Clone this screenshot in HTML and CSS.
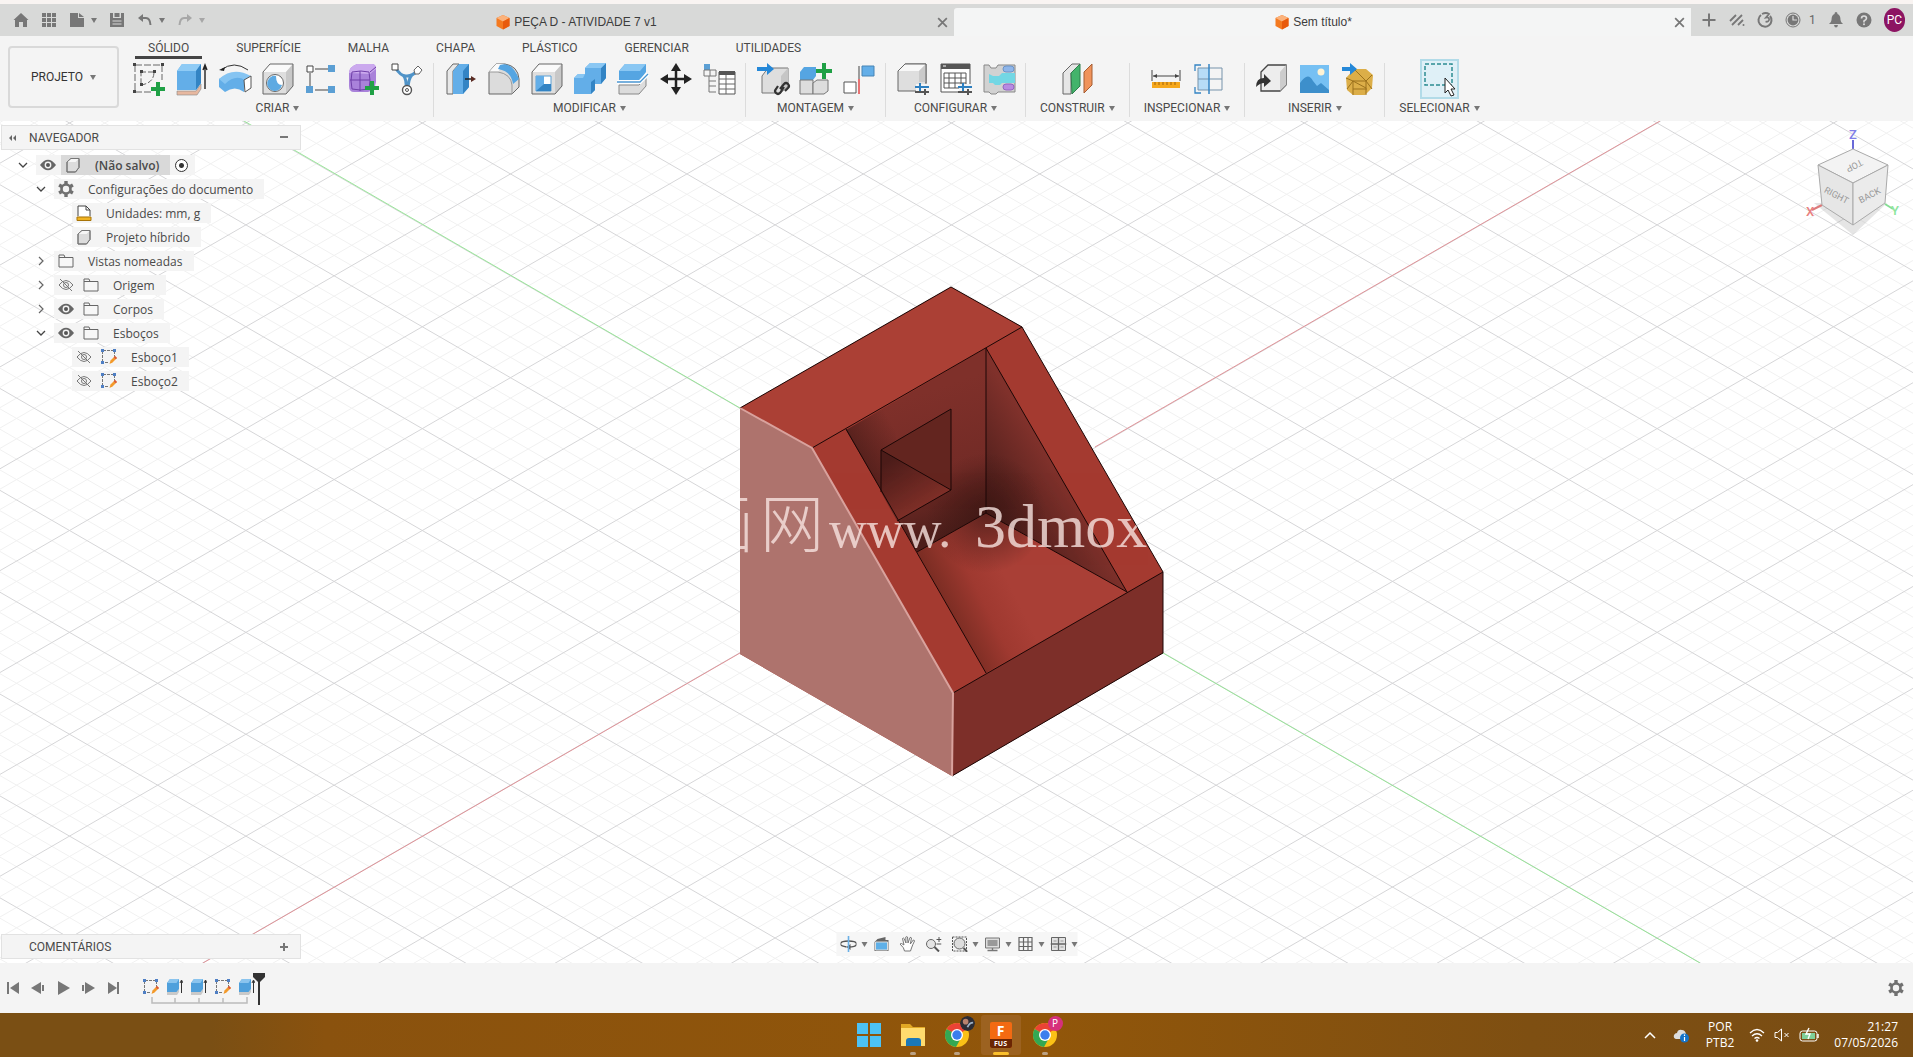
FILE: index.html
```html
<!DOCTYPE html>
<html lang="pt-BR">
<head>
  <meta charset="UTF-8" />
  <meta name="viewport" content="width=device-width, initial-scale=1.0"/>
  <title>Sem título*</title>
  <link rel="stylesheet" href="styles.css">
</head>
<body>
  <!-- shared icons -->
  <svg class="defs" aria-hidden="true">
    <symbol id="fusion" viewBox="0 0 14 16">
      <path d="M7 1l6.5 3v8L7 15.500.5 12V4z" fill="#f47a20"/>
      <path d="M7 1l6.5 3L7 7.500.5 4z" fill="#fbb27c"/>
      <path d="M7 7.5L13.5 4v8L7 15.5z" fill="#e85a0c"/>
    </symbol>
    <symbol id="close" viewBox="0 0 12 12"><path d="M2 2l8 8M10 2l-8 8" stroke="#777" stroke-width="1.6"/></symbol>
    <symbol id="eye" viewBox="0 0 16 16">
      <path d="M0 8q8-10.5 16 0q-8 10.500-16 0z" fill="#666"/>
      <circle cx="8" cy="8" r="3.4" fill="#f4f4f4"/><circle cx="8" cy="8" r="2" fill="#555"/>
    </symbol>
    <symbol id="eye-off" viewBox="0 0 16 16">
      <path d="M1 8q7-9 14 0q-7 9-14 0z" fill="none" stroke="#777"/>
      <circle cx="8" cy="8" r="2.5" fill="none" stroke="#777"/>
      <path d="M2 2l12 12" stroke="#777"/>
    </symbol>
    <symbol id="folder" viewBox="0 0 16 16"><path d="M1 14V2h5l1 2.5h8V14zM1 4.5h6" fill="#f7f7f7" stroke="#666"/></symbol>
    <symbol id="body" viewBox="0 0 16 16">
      <path d="M2 5l4-3.500h8v9L10.500 15H2z" fill="#dcdcdc" stroke="#777"/>
      <path d="M2 5l4-3.500h8L10.500 5z" fill="#f6f6f6"/>
      <path d="M2 5l4-3.500h8v9L10.500 15H2z" fill="none" stroke="#777"/>
    </symbol>
    <symbol id="gear" viewBox="0 0 16 16">
      <circle cx="8" cy="8" r="4.5" fill="none" stroke="#707070" stroke-width="2.6"/>
      <path d="M8 0v3M8 13v3M1.100 4l2.600 1.500M12.300 10.500l2.600 1.500M1.100 12l2.600-1.500M12.300 5.500L14.900 4" stroke="#707070" stroke-width="3.4"/>
    </symbol>
    <symbol id="units" viewBox="0 0 16 16">
      <path d="M2 11V1h8l4 4v6" fill="#fff" stroke="#444"/><path d="M10 1v4h4" fill="none" stroke="#444"/>
      <path d="M1 12h14v3.500H1z" fill="#f0b323" stroke="#a87408"/>
    </symbol>
    <symbol id="sketch" viewBox="0 0 16 16">
      <path d="M1.500 13V1.500h12V9M4 13.500h4" fill="none" stroke="#777" stroke-dasharray="3 1"/>
      <path d="M0 0h3v3H0zM12 0h3v3h-3zM0 12h3v3H0z" fill="#4f7fc4"/>
      <path d="M8.500 15l1-3.500L14 7l2 2-4.500 4.500z" fill="#f39a2b"/><path d="M14 7l2 2-1.300 1.300-2-2z" fill="#d9573e"/>
    </symbol>
    <symbol id="extrude-s" viewBox="0 0 16 16">
      <path d="M0 12h10l2-2v3l-2 3H0z" fill="#c9c9c9"/>
      <path d="M0 4l3-4h9v10l-2.500 3H0z" fill="#4fa0dc"/><path d="M0 4l3-4h9L9.500 4z" fill="#8ac4ee"/>
      <path d="M14.500 14V2M13 4l1.500-3L16 4" fill="none" stroke="#333"/>
    </symbol>
    <symbol id="down" viewBox="0 0 12 12"><path d="M2 4l4 4 4-4" fill="none" stroke="#444" stroke-width="1.3"/></symbol>
    <symbol id="right" viewBox="0 0 12 12"><path d="M4 2l4 4-4 4" fill="none" stroke="#666" stroke-width="1.2"/></symbol>
    <symbol id="cube" viewBox="0 0 32 32">
      <path d="M1 9l7-8h23v22l-7 8H1z" fill="#dedede"/>
      <path d="M1 9l7-8h23l-7 8z" fill="#fafafa"/><path d="M24 9l7-8v22l-7 8z" fill="#c8c8c8"/>
      <path d="M1 9l7-8h23v22l-7 8H1z" fill="none" stroke="#666"/>
    </symbol>
    <symbol id="chrome" viewBox="0 0 26 26">
      <circle cx="13" cy="13" r="12" fill="#fbc116"/>
      <path d="M13 13L2.600 7A12 12 0 0 1 23.400 7z" fill="#ea4335"/>
      <path d="M13 13L2.600 7A12 12 0 0 0 12 25l5-9z" fill="#34a853"/>
      <circle cx="13" cy="13" r="6" fill="#fff"/><circle cx="13" cy="13" r="4.7" fill="#3b7ded"/>
    </symbol>
  </svg>

  <header class="titlebar">
    <div class="quick">
      <button title="Início"><svg class="ico" viewBox="0 0 16 16"><path d="M8 1l7.500 7H14v7h-4v-5H6v5H2V8H.5z" fill="#777"/></svg></button>
      <button title="Painel de dados"><svg class="ico" viewBox="0 0 16 16"><path d="M1 1h4v4H1zM6 1h4v4H6zM11 1h4v4h-4zM1 6h4v4H1zM6 6h4v4H6zM11 6h4v4h-4zM1 11h4v4H1zM6 11h4v4H6zM11 11h4v4h-4z" fill="#777"/></svg></button>
      <button class="with-caret" title="Arquivo"><svg class="ico" viewBox="0 0 16 16"><path d="M1 1h8v5h6v9H1zM10 1l5 4h-5z" fill="#777"/></svg><i class="caret"></i></button>
      <button title="Salvar"><svg class="ico" viewBox="0 0 16 16"><path d="M1 1h3v5h8V1h3v14H1z" fill="#777"/><path d="M5.500 1h5v4h-5z" fill="#777"/><path d="M3.500 9h9M3.500 12h9" stroke="#d8d8d8"/></svg></button>
      <button class="with-caret" title="Desfazer"><svg class="ico" viewBox="0 0 16 16"><path d="M3 6h6q4 0 4.500 7" fill="none" stroke="#777" stroke-width="2"/><path d="M1 6l5-4v8z" fill="#777"/></svg><i class="caret"></i></button>
      <button class="with-caret faded" title="Refazer"><svg class="ico" viewBox="0 0 16 16"><path d="M13 6H7q-4 0-4.500 7" fill="none" stroke="#777" stroke-width="2"/><path d="M15 6l-5-4v8z" fill="#777"/></svg><i class="caret"></i></button>
    </div>
    <div class="doc-tab">
      <span class="doc-name"><svg class="doc-ico"><use href="#fusion"/></svg>PEÇA D - ATIVIDADE 7 v1</span>
      <button title="Fechar"><svg class="close"><use href="#close"/></svg></button>
    </div>
    <div class="doc-tab active">
      <span class="doc-name"><svg class="doc-ico"><use href="#fusion"/></svg>Sem título*</span>
      <button title="Fechar"><svg class="close"><use href="#close"/></svg></button>
    </div>
    <div class="account">
      <button title="Novo projeto"><svg class="ico" viewBox="0 0 16 16"><path d="M8 1.500v13M1.500 8h13" stroke="#777" stroke-width="2"/></svg></button>
      <button title="Extensões"><svg class="ico" viewBox="0 0 16 16"><path d="M1 9l6-6M3 13L13 3M9 13l5-5" stroke="#777" stroke-width="1.8"/><circle cx="14.5" cy="13" r="1" fill="#777"/></svg></button>
      <button title="Status"><svg class="ico" viewBox="0 0 16 16"><path d="M4 3A6.500 6.500 0 1 0 13 4" fill="none" stroke="#777" stroke-width="2"/><path d="M5 2q4-2 7 0L9 5.500q3.500-.5 3 2.500-1 2.500-3.500 1.500" fill="none" stroke="#777" stroke-width="1.8"/></svg></button>
      <button class="jobs" title="Tarefas"><svg class="ico" viewBox="0 0 16 16"><circle cx="8" cy="8" r="7" fill="none" stroke="#777"/><circle cx="8" cy="8" r="5.4" fill="#777"/><path d="M8 4v4h4" fill="none" stroke="#ddd" stroke-width="1.2"/></svg>1</button>
      <button title="Notificações"><svg class="ico" viewBox="0 0 16 16"><path d="M8 0q1.500 0 1.500 2Q12.500 3 12.500 8q0 2 2.500 4H1q2.500-2 2.500-4 0-5 3-6Q6.500 0 8 0zM6 13h4q-.5 2.500-2 2.500T6 13z" fill="#777"/></svg></button>
      <button title="Ajuda"><svg class="ico" viewBox="0 0 16 16"><circle cx="8" cy="8" r="7.5" fill="#777"/><path d="M5.500 6.500Q5.500 4 8 4t2.500 2.300Q10.500 7.500 8 9v1.500" fill="none" stroke="#ddd" stroke-width="1.6"/><circle cx="8" cy="12.3" r="1" fill="#ddd"/></svg></button>
      <button class="avatar">PC</button>
    </div>
  </header>

  <section class="ribbon">
    <button class="workspace-btn">PROJETO<i class="caret"></i></button>
    <div class="ribbon-main">
      <nav class="ribbon-tabs">
        <button class="current">SÓLIDO</button><button>SUPERFÍCIE</button><button>MALHA</button><button>CHAPA</button><button>PLÁSTICO</button><button>GERENCIAR</button><button>UTILIDADES</button>
      </nav>
      <div class="groups">
        <div class="group">
          <div class="tools">
            <button title="Criar esboço"><svg class="tool" viewBox="0 0 32 32"><path d="M2 2h27v15M2 2v27h16" fill="none" stroke="#666" stroke-dasharray="7 2"/><path d="M8 9h13q0 11-13 13z" fill="none" stroke="#666" stroke-dasharray="5 2"/><path d="M0 0h3v3H0zM28 0h3v3h-3zM0 27h3v3H0zM7 7h3v3H7zM20 7h3v3h-3zM7 20h3v3H7z" fill="#444"/><path d="M23 19h4v5h5v4h-5v5h-4v-5h-5v-4h5z" fill="#1fa045"/></svg></button>
            <button title="Extrusão"><svg class="tool" viewBox="0 0 32 32"><path d="M1 28h19l5-7v5l-4 6H1z" fill="#e7b8a0" stroke="#888" stroke-width=".6"/><path d="M1 8l5-7h19v19l-5 7H1z" fill="#63aee8"/><path d="M1 8l5-7h19l-5 7z" fill="#8fcbf5"/><path d="M20 8l5-7v19l-5 7z" fill="#3384c4"/><path d="M29 26V3M27 7l2-5 2 5" fill="none" stroke="#222" stroke-width="1.4"/></svg></button>
            <button title="Revolução"><svg class="tool" viewBox="0 0 32 32"><path d="M0 16q14-9 26 0l-1 13q-9-7-19 0L0 24z" fill="#63aee8"/><path d="M0 16q14-13 32-3l-6 4q-10-6-20 4z" fill="#85c4f2"/><path d="M25 17l7-4v12l-6 4z" fill="#fff" stroke="#555"/><path d="M2 7Q15-3 29 7" fill="none" stroke="#333"/><path d="M0 7l6-3-1 4z" fill="#222"/></svg></button>
            <button title="Furo"><svg class="tool" viewBox="0 0 32 32"><use href="#cube" width="32" height="32"/><circle cx="13" cy="20" r="8.5" fill="#fff" stroke="#666"/><path d="M14 13a7.500 7.500 0 1 0 6 9q-6 0-6-9z" fill="#5eaae2"/></svg></button>
            <button title="Padrão"><svg class="tool" viewBox="0 0 32 32"><path d="M10 6h14M5 10v14M10 27h14" stroke="#444"/><path d="M2 3h6v6H2z" fill="#fff" stroke="#444"/><path d="M23 2h7v7h-7zM1 23h7v7H1zM23 23h7v7h-7z" fill="#5b9fd4"/></svg></button>
            <button title="Criar forma"><svg class="tool" viewBox="0 0 32 32"><path d="M1 10q0-6 8-9h15q4 0 4 5v13q-1 8-8 10H6q-5 0-5-6z" fill="#a982da"/><path d="M1 10q0-6 8-9h15q4 0 4 5l-6 5z" fill="#cba9ee"/><path d="M4 9q9-2 17 0 2 8 0 17-9 2-17 0-2-8 0-17zM2 17h20M12 8v20M22 9l6-5" fill="none" stroke="#6f3fa8"/><path d="M22 18h4v5h5v4h-5v5h-4v-5h-5v-4h5z" fill="#1fa045"/></svg></button>
            <button title="Suporte"><svg class="tool" viewBox="0 0 32 32"><path d="M4 4q6 10 12 9 6 0 11-6M12 12q4 4 3 15M21 12q-4 4-4 15" fill="none" stroke="#4f93c8" stroke-width="3"/><path d="M1 1h6v6H1z" fill="#fff" stroke="#444"/><path d="M27 3l4 4-3 4h-4l-1-4z" fill="#fff" stroke="#666"/><circle cx="16" cy="27" r="4.5" fill="#fff" stroke="#555" stroke-width="1.4"/><circle cx="16" cy="27" r="1.5" fill="none" stroke="#555"/></svg></button>
          </div>
          <button class="group-label">CRIAR<i class="caret"></i></button>
        </div>
        <div class="group">
          <div class="tools">
            <button title="Pressionar e puxar"><svg class="tool" viewBox="0 0 32 32"><path d="M2 8l6-7h6l-6 7v23H2z" fill="#e8e8e8" stroke="#666"/><path d="M8 8l6-7h10v23l-6 7H8z" fill="#63aee8"/><path d="M18 8l6-7v23l-6 7z" fill="#3384c4"/><path d="M20 16h9" stroke="#222" stroke-width="1.5"/><path d="M26 13l5 3-5 3z" fill="#5a2a22"/></svg></button>
            <button title="Arredondamento"><svg class="tool" viewBox="0 0 32 32"><path d="M1 9l7-8h9q13 2 14 15v8l-7 7H1z" fill="#dcdcdc" stroke="#666"/><path d="M1 9l7-8h8l-6 8z" fill="#fafafa"/><path d="M12 2q12-4 19 14l-6 5Q23 8 10 6z" fill="#55a5e2"/><path d="M1 9h9q13 2 14 13v9" fill="none" stroke="#999"/></svg></button>
            <button title="Casca"><svg class="tool" viewBox="0 0 32 32"><use href="#cube" width="32" height="32"/><path d="M5 13h15v15H5z" fill="#fff" stroke="#5b9fd4"/><path d="M5 13h8v8h7v7H5z" fill="#63aee8"/><path d="M5 28l8-7h7v7z" fill="#3384c4"/></svg></button>
            <button title="Combinar"><svg class="tool" viewBox="0 0 32 32"><path d="M0 15l4-4h7V5l5-5h16v15l-5 6h-6v6l-4 4H0z" fill="#63aee8"/><path d="M27 5l5-5v15l-5 6zM17 19l4-3v11l-4 4z" fill="#3384c4"/><path d="M11 5l5-5h16l-5 5zM0 15l4-4h7l-2 4z" fill="#8ac7f3"/></svg></button>
            <button title="Dividir corpo"><svg class="tool" viewBox="0 0 32 32"><path d="M2 22h20l7-7v8l-7 8H2z" fill="#dcdcdc" stroke="#888"/><path d="M2 8l6-7h21v8l-6 8H2z" fill="#55a5e2"/><path d="M2 8l6-7h21l-6 7z" fill="#8ac7f3"/><path d="M0 19h23l8-8" fill="none" stroke="#fff" stroke-width="4"/><path d="M0 19h23l8-8" fill="none" stroke="#4b97d2" stroke-width="1.3"/></svg></button>
            <button title="Mover"><svg class="tool" viewBox="0 0 32 32"><path d="M16 5v22M5 16h22" stroke="#222" stroke-width="2.5"/><path d="M16 0l5 8H11zM16 32l5-8H11zM0 16l8-5v10zM32 16l-8-5v10z" fill="#222"/></svg></button>
            <button title="Alterar parâmetros"><svg class="tool" viewBox="0 0 32 32"><path d="M1 1h6v6H1z" fill="#5b9fd4"/><path d="M1 7h12v6H1zM7 7v6M6 13v16M6 18h7M6 23h7M6 29h7" fill="none" stroke="#777"/><path d="M16 9h16v22H16z" fill="#fff" stroke="#555"/><path d="M16 8h16v4H16z" fill="#555"/><path d="M16 16h16M16 21h16M16 26h16M23 12v19" stroke="#666"/></svg></button>
          </div>
          <button class="group-label">MODIFICAR<i class="caret"></i></button>
        </div>
        <div class="group">
          <div class="tools">
            <button title="Inserir componente"><svg class="tool" viewBox="0 0 32 32"><path d="M5 13l6-8h20v18l-7 7H5z" fill="#dedede" stroke="#777"/><path d="M24 13l7-8v18l-7 7z" fill="#c6c6c6"/><path d="M0 4h10V0l7 6-7 6V8H0z" fill="#2588d8"/><path d="M23 26l4-5q2-2 4 0t0 4l-3 3M27 24l-4 6q-2 2-4 0t0-4l2-3" fill="none" stroke="#333" stroke-width="2.2"/></svg></button>
            <button title="Novo componente"><svg class="tool" viewBox="0 0 32 32"><path d="M0 9l4-5h12v9l-3 4H0z" fill="#55a5e2"/><path d="M0 17h13v14H0z" fill="#ddd" stroke="#777"/><path d="M13 20l4-3h11v11l-4 3H13z" fill="#ddd" stroke="#777"/><path d="M22 0h4v6h6v4h-6v6h-4v-6h-6V6h6z" fill="#1fa045"/></svg></button>
            <button title="Junta"><svg class="tool" viewBox="0 0 32 32"><path d="M1 19h12v11H1z" fill="#fff" stroke="#555"/><path d="M19 3h12v10H19z" fill="#63aee8" stroke="#4784b5"/><path d="M16 3v13" stroke="#444"/><path d="M16 16v15" stroke="#e23b3b" stroke-width="1.4"/></svg></button>
          </div>
          <button class="group-label">MONTAGEM<i class="caret"></i></button>
        </div>
        <div class="group">
          <div class="tools">
            <button title="Configurar modelo"><svg class="tool" viewBox="0 0 32 32"><path d="M1 8l7-7h21v20l-7 7H1z" fill="#dedede" stroke="#666"/><path d="M1 8l7-7h21l-7 7z" fill="#f8f8f8"/><path d="M22 8l7-7v18h-7z" fill="#cacaca"/><path d="M1 8l7-7h21v19" fill="none" stroke="#666"/><path d="M19 21h14v11H19z" fill="#f4f4f4"/><path d="M18 24h14M23 20v8" stroke="#2d7fc0" stroke-width="2"/><path d="M18 29h14M28 26v6" stroke="#555" stroke-width="2"/></svg></button>
            <button title="Tabela de configurações"><svg class="tool" viewBox="0 0 32 32"><path d="M1 1h29v28H1z" fill="#fff" stroke="#555"/><path d="M1 1h29v5H1z" fill="#555"/><path d="M3 3h3" stroke="#fff"/><path d="M4 10h22v15H4zM4 15h22M4 20h22M9 10v15M15 10v15M21 10v15" fill="none" stroke="#555"/><path d="M19 21h14v11H19z" fill="#f4f4f4"/><path d="M18 24h14M23 20v8" stroke="#2d7fc0" stroke-width="2"/><path d="M18 29h14M28 26v6" stroke="#555" stroke-width="2"/></svg></button>
            <button title="Regras"><svg class="tool" viewBox="0 0 32 32"><path d="M1 2h5l2 3h5l2-3h17v27H15l-2 2H8l-2-2H1z" fill="#d2d2d2" stroke="#888"/><path d="M6 11l4 2h6l3-3h13v10H19l-2 2h-5l-2-2H6z" fill="#73d7e4"/><rect x="20" y="3" width="11" height="6" rx="3" fill="#8fb6ea" stroke="#6b93c8"/><rect x="20" y="21" width="11" height="6" rx="3" fill="#b78be2" stroke="#9465c2"/></svg></button>
          </div>
          <button class="group-label">CONFIGURAR<i class="caret"></i></button>
        </div>
        <div class="group">
          <div class="tools">
            <button title="Plano de deslocamento"><svg class="tool" viewBox="0 0 32 32"><path d="M2 10l9-9h8l-9 9v21H2z" fill="#e6e6e6" stroke="#666"/><path d="M10 10l9-9v22l-8 8z" fill="#43b36b" stroke="#2f7d4c"/><path d="M23 9l8-8v21l-8 8z" fill="#f0935b" stroke="#a55c33"/></svg></button>
          </div>
          <button class="group-label">CONSTRUIR<i class="caret"></i></button>
        </div>
        <div class="group">
          <div class="tools">
            <button title="Medir"><svg class="tool" viewBox="0 0 32 32"><path d="M2 7v11M30 7v11M3 13h26" stroke="#444"/><path d="M3 13l4-2v4zM29 13l-4-2v4z" fill="#444"/><path d="M2 19h28v6H2z" fill="#f6a81c"/><path d="M5 19v3M9 19v3M13 19v3M17 19v3M21 19v3M25 19v3" stroke="#a0620a"/></svg></button>
            <button title="Zebra"><svg class="tool" viewBox="0 0 32 32"><path d="M5 5h11v22H5z" fill="#b7dcf7"/><path d="M5 5h24v22H5zM5 16h24" fill="none" stroke="#7693ab"/><path d="M16 1v30" stroke="#3384c4" stroke-width="1.5"/><path d="M8 2H2v6M2 24v6h6" fill="none" stroke="#3384c4" stroke-width="1.3"/></svg></button>
          </div>
          <button class="group-label">INSPECIONAR<i class="caret"></i></button>
        </div>
        <div class="group">
          <div class="tools">
            <button title="Inserir derivação"><svg class="tool" viewBox="0 0 32 32"><path d="M5 9l7-7h18v20l-6 6H5z" fill="#ededed" stroke="#444" stroke-width="1.3"/><path d="M24 9l6-7v20l-6 6z" fill="#ccc"/><path d="M0 24q0-9 8-9v-4l7 7-7 6v-4q-4 0-8 4z" fill="#333"/></svg></button>
            <button title="Tela"><svg class="tool" viewBox="0 0 32 32"><path d="M1 2h29v28H1z" fill="#76c0f3"/><circle cx="22" cy="9" r="3.5" fill="#fff3d4"/><path d="M1 20q8-12 13-2l4 5 4-3 8 7v3H1z" fill="#3d8fcb"/></svg></button>
            <button title="Inserir malha"><svg class="tool" viewBox="0 0 32 32"><path d="M4 15l8-9h12l7 6-1 13-7 7H11l-6-5z" fill="#dcae48"/><path d="M11 18h13l6-6M11 18l-7-3M24 18l6 8M24 18v14M11 18v14M11 18l13 7M12 6l12 12M5 26l6-8M11 26h14" fill="none" stroke="#9b711c"/><path d="M0 4h8V0l7 6-7 6V8H0z" fill="#2588d8"/></svg></button>
          </div>
          <button class="group-label">INSERIR<i class="caret"></i></button>
        </div>
        <div class="group">
          <div class="tools">
            <button class="selected" title="Selecionar"><svg class="tool" viewBox="0 0 32 32"><path d="M1 1h27v21H1z" fill="none" stroke="#2c8c93" stroke-width="1.5" stroke-dasharray="4 2"/><path d="M21 15v15l3-3 3 6 3-1-3-6h4z" fill="#fff" stroke="#222"/></svg></button>
          </div>
          <button class="group-label">SELECIONAR<i class="caret"></i></button>
        </div>
      </div>
    </div>
  </section>

  <main class="viewport">
    <svg class="scene" viewBox="0 121 1913 842" preserveAspectRatio="xMidYMid slice">
      <defs>
        <clipPath id="silhouette"><path d="M740 408L951 287l71 40 141 245v81L952 776 740 654z"/></clipPath>
        <linearGradient id="wallBack" gradientUnits="userSpaceOnUse" x1="930" y1="390" x2="975" y2="525">
          <stop offset="0" stop-color="#7f302a"/><stop offset=".6" stop-color="#732b26"/><stop offset="1" stop-color="#4c1e1a"/>
        </linearGradient>
        <linearGradient id="wallEdge" gradientUnits="userSpaceOnUse" x1="865" y1="470" x2="905" y2="447">
          <stop offset="0" stop-color="#4c1d19" stop-opacity=".8"/><stop offset="1" stop-color="#4c1d19" stop-opacity="0"/>
        </linearGradient>
        <linearGradient id="wallRight" gradientUnits="userSpaceOnUse" x1="986" y1="500" x2="1050" y2="460">
          <stop offset="0" stop-color="#4a1d1a"/><stop offset="1" stop-color="#80312b"/>
        </linearGradient>
        <linearGradient id="floor" gradientUnits="userSpaceOnUse" x1="935" y1="610" x2="1005" y2="575">
          <stop offset="0" stop-color="#70291f"/><stop offset=".6" stop-color="#9f3930"/><stop offset="1" stop-color="#a93f36"/>
        </linearGradient>
        <radialGradient id="shade" gradientUnits="userSpaceOnUse" cx="986" cy="513" r="60">
          <stop offset="0" stop-color="#3a1512" stop-opacity=".7"/><stop offset="1" stop-color="#3a1512" stop-opacity="0"/>
        </radialGradient>
        <linearGradient id="hole" gradientUnits="userSpaceOnUse" x1="890" y1="460" x2="925" y2="515">
          <stop offset="0" stop-color="#4c1c19"/><stop offset="1" stop-color="#86322a"/>
        </linearGradient>
      </defs>
      <path d="M0 121h1913v842H0z" fill="#fff"/>
      <g id="minor" class="minor"></g>
      <g id="major" class="major"></g>
      <path class="axis-line" d="M740 408L244 121M1163 653L1700 963" stroke="#8be58b"/>
      <path class="axis-line" d="M740 653L203 963M1095 447L1660 121" stroke="#e0868c"/>

      <path d="M740 408L951 287l71 40 141 245v81L952 776 740 654z" fill="#a43a30"/>
      <path d="M740 408L951 287l71 40-210 121z" fill="#ab4035"/>
      <path d="M953 693l210-121v81L952 776z" fill="#7d2f29"/>
      <path d="M846 430l140-82v165l-69 39z" fill="url(#wallBack)"/>
      <path d="M846 430l50-29v114z" fill="url(#wallEdge)"/>
      <path d="M986 348v165l141 79z" fill="url(#wallRight)"/>
      <path d="M917 552l69-39 141 79-141 81z" fill="url(#floor)"/>
      <path d="M917 552l69-39 141 79-141 81zM917 552l-40-60 109-144 141 244-141-79z" fill="url(#shade)"/>
      <path d="M881 450l70-41v81z" fill="#63251f"/>
      <path d="M881 450l70 40-54 31-16-29z" fill="url(#hole)"/>
      <path d="M740 408L951 287l71 40 141 245v81L952 776M812 448l210-121M953 693l210-121M846 429l140 244M986 348v165l-69 39M986 348l141 244-141-79M881 492v-42l70-41v81l-54 31M881 450l70 40" fill="none" stroke="#1c0706"/>
      <path d="M740 408l72 40 141 245-1 83-212-122z" fill="#ae736d"/>
      <path d="M740 408l72 40 141 245-1 83" fill="none" stroke="#d9a29d" stroke-width="2"/>
      <g class="watermark" clip-path="url(#silhouette)">
        <text x="690" y="547">画</text><text x="760" y="547">网</text>
        <text class="www" x="829" y="547">www.</text><text class="host" x="975" y="547">3dmox</text>
      </g>
    </svg>

    <svg class="viewcube" viewBox="0 0 110 110">
      <path d="M15 78l39 32 34-32z" fill="#999" opacity=".25"/>
      <path d="M54 24v-9" stroke="#6a6ad8" stroke-width="2"/><path d="M23 80l-10 5" stroke="#dd7a7a" stroke-width="2"/><path d="M86 79l8 5" stroke="#86dd95" stroke-width="2"/>
      <path d="M54 24l35 16-35 18-35-18z" fill="#f3f3f3" stroke="#aaa"/>
      <path d="M19 40l35 18v42L23 80z" fill="#e6e6e6" stroke="#aaa"/>
      <path d="M89 40L54 58v42l32-22z" fill="#ebebeb" stroke="#aaa"/>
      <text class="axis z" x="54" y="14">Z</text><text class="axis x" x="11" y="91">X</text><text class="axis y" x="96" y="90">Y</text>
      <text class="face" transform="translate(54 38) rotate(153)">TOP</text>
      <text class="face" transform="translate(36 73) rotate(28)">RIGHT</text>
      <text class="face" transform="translate(72 73) rotate(-28)">BACK</text>
    </svg>

    <aside class="browser">
      <div class="panel-head">
        <button title="Recolher"><svg class="ico-s" viewBox="0 0 12 12"><path d="M5 3v6L2 6zM9 3v6L6 6z" fill="#666"/></svg></button>
        <span>NAVEGADOR</span>
        <button title="Minimizar"><svg class="ico-s" viewBox="0 0 12 12"><path d="M2 5h8" stroke="#777" stroke-width="2"/></svg></button>
      </div>
      <ul class="tree">
        <li><button class="chev"><svg class="ico-s"><use href="#down"/></svg></button><div class="chip"><svg class="ico"><use href="#eye"/></svg><span class="picked"><svg class="ico"><use href="#body"/></svg><b>(Não salvo)</b></span><input type="radio" checked aria-label="Ativar componente"></div></li>
        <li class="l1"><button class="chev"><svg class="ico-s"><use href="#down"/></svg></button><div class="chip"><svg class="ico"><use href="#gear"/></svg><span>Configurações do documento</span></div></li>
        <li class="l2"><div class="chip"><svg class="ico"><use href="#units"/></svg><span>Unidades: mm, g</span></div></li>
        <li class="l2"><div class="chip"><svg class="ico"><use href="#body"/></svg><span>Projeto híbrido</span></div></li>
        <li class="l1"><button class="chev"><svg class="ico-s"><use href="#right"/></svg></button><div class="chip"><svg class="ico"><use href="#folder"/></svg><span>Vistas nomeadas</span></div></li>
        <li class="l1"><button class="chev"><svg class="ico-s"><use href="#right"/></svg></button><div class="chip"><svg class="ico"><use href="#eye-off"/></svg><svg class="ico"><use href="#folder"/></svg><span>Origem</span></div></li>
        <li class="l1"><button class="chev"><svg class="ico-s"><use href="#right"/></svg></button><div class="chip"><svg class="ico"><use href="#eye"/></svg><svg class="ico"><use href="#folder"/></svg><span>Corpos</span></div></li>
        <li class="l1"><button class="chev"><svg class="ico-s"><use href="#down"/></svg></button><div class="chip"><svg class="ico"><use href="#eye"/></svg><svg class="ico"><use href="#folder"/></svg><span>Esboços</span></div></li>
        <li class="l2"><div class="chip"><svg class="ico"><use href="#eye-off"/></svg><svg class="ico"><use href="#sketch"/></svg><span>Esboço1</span></div></li>
        <li class="l2"><div class="chip"><svg class="ico"><use href="#eye-off"/></svg><svg class="ico"><use href="#sketch"/></svg><span>Esboço2</span></div></li>
      </ul>
    </aside>

    <div class="panel-head comments">
      <span>COMENTÁRIOS</span>
      <button title="Adicionar"><svg class="ico-s" viewBox="0 0 12 12"><path d="M2 6h8M6 2v8" stroke="#777" stroke-width="2"/></svg></button>
    </div>

    <div class="navbar">
      <button class="with-caret" title="Órbita"><svg class="ico" viewBox="0 0 16 16"><path d="M6 11Q0 10 0 8q0-3 8-3t8 3q0 3-8 3" fill="none" stroke="#555" stroke-width="1.4"/><path d="M10 8l-4 3 4 3z" fill="#555"/><path d="M8 0v16" stroke="#6ab0e6" stroke-width="1.6"/></svg><i class="caret"></i></button>
      <button title="Olhar para"><svg class="ico" viewBox="0 0 16 16"><path d="M1 6l3-3 8-2v3h3v11H1z" fill="#666"/><path d="M2 6h12v8H2z" fill="#5fb0e8" stroke="#ddd"/></svg></button>
      <button title="Pan"><svg class="ico" viewBox="0 0 16 16"><path d="M5 15q0-3-4.500-7 1-1.500 4 1L3 2.500q1-1 1.600 0L6.500 7 6.300 1q1-1 1.700 0l.5 6 2-5.500q1.200-.5 1.500.5L10.800 8l3-4q1-.2 1.200 1-2 4-3 7l-1 3z" fill="#fff" stroke="#777"/></svg></button>
      <button title="Zoom"><svg class="ico" viewBox="0 0 16 16"><circle cx="5.5" cy="8" r="4.5" fill="#e4e4e4" stroke="#666"/><path d="M9 11l4.500 4.500" stroke="#555" stroke-width="2"/><path d="M11 3.500h5M13.500 1v5M11 8h5" stroke="#555"/></svg></button>
      <button class="with-caret" title="Janela de zoom"><svg class="ico" viewBox="0 0 16 16"><path d="M1 1h14v14H1z" fill="none" stroke="#555" stroke-dasharray="2 1"/><circle cx="8" cy="7.5" r="5.5" fill="#ddd" stroke="#666"/><path d="M12 12l4 4" stroke="#555" stroke-width="2"/></svg><i class="caret"></i></button>
      <button class="with-caret" title="Configurações de exibição"><svg class="ico" viewBox="0 0 16 16"><path d="M1 2h14v10H1z" fill="#ddd" stroke="#777"/><path d="M3 4h10v6H3z" fill="#999"/><path d="M3 14.500h10M8 12v2" stroke="#777" stroke-width="1.4"/></svg><i class="caret"></i></button>
      <button class="with-caret" title="Grade"><svg class="ico" viewBox="0 0 16 16"><path d="M1.500 1.500h13v13h-13zM6 1v14M10.500 1v14M1 6h14M1 10.500h14" fill="none" stroke="#666" stroke-width="1.2"/></svg><i class="caret"></i></button>
      <button class="with-caret" title="Viewports"><svg class="ico" viewBox="0 0 16 16"><path d="M1 1.500h14v13H1z" fill="#e2e2e2" stroke="#666"/><path d="M8 1v14M0 8h16" stroke="#666" stroke-width="1.3"/><path d="M3 5h3M10 5h3M3 11h3M10 11h3" stroke="#999"/></svg><i class="caret"></i></button>
    </div>
  </main>

  <section class="timeline">
    <div class="playback">
      <button title="Início"><svg class="ico" viewBox="0 0 16 16"><path d="M3 2v12" stroke="#777" stroke-width="2"/><path d="M14 2v12L5 8z" fill="#777"/></svg></button>
      <button title="Anterior"><svg class="ico" viewBox="0 0 16 16"><path d="M11 2v12L1 8z" fill="#777"/><path d="M13 5v6" stroke="#777" stroke-width="2"/></svg></button>
      <button title="Reproduzir"><svg class="ico" viewBox="0 0 16 16"><path d="M3 1l12 7-12 7z" fill="#777"/></svg></button>
      <button title="Próximo"><svg class="ico" viewBox="0 0 16 16"><path d="M5 2v12l10-6z" fill="#777"/><path d="M3 5v6" stroke="#777" stroke-width="2"/></svg></button>
      <button title="Fim"><svg class="ico" viewBox="0 0 16 16"><path d="M3 2v12l9-6z" fill="#777"/><path d="M13 2v12" stroke="#777" stroke-width="2"/></svg></button>
    </div>
    <div class="steps">
      <div class="step"><svg class="ico"><use href="#sketch"/></svg></div>
      <div class="step"><svg class="ico"><use href="#extrude-s"/></svg></div>
      <div class="step"><svg class="ico"><use href="#extrude-s"/></svg></div>
      <div class="step"><svg class="ico"><use href="#sketch"/></svg></div>
      <div class="step"><svg class="ico"><use href="#extrude-s"/></svg></div>
      <svg class="marker" viewBox="0 0 12 32"><path d="M0 0h12v4L7 9H5L0 4z" fill="#333"/><path d="M6 8v24" stroke="#333" stroke-width="2"/></svg>
      <svg class="bracket" viewBox="0 0 97 8"><path d="M1 0v6h95V0M24 1v5M48 1v5M72 1v5" fill="none" stroke="#bbb" stroke-width="1.5"/></svg>
    </div>
    <button class="settings" title="Configurações"><svg class="ico"><use href="#gear"/></svg></button>
  </section>

  <footer class="taskbar">
    <div class="apps">
      <button title="Iniciar"><svg class="app" viewBox="0 0 26 26"><path d="M1 1h11v11H1zM14 1h11v11H14zM1 14h11v11H1zM14 14h11v11H14z" fill="#4cc2f5"/></svg></button>
      <button class="open" title="Explorador"><svg class="app" viewBox="0 0 26 26"><path d="M1 2h9l3 3h12v19H1z" fill="#e2a824"/><path d="M1 6h24v18H1z" fill="#ffdb6e"/><path d="M6 24v-5q0-3 3-3h9q3 0 3 3v5z" fill="#1b78b8"/></svg></button>
      <button class="open" title="Chrome"><svg class="app"><use href="#chrome"/></svg><svg class="badge" viewBox="0 0 16 16"><circle cx="8" cy="8" r="8" fill="#2c2c34"/><circle cx="6" cy="6" r="3" fill="#b9826e"/><path d="M8 12q2-5 6-5" stroke="#9db0c4" stroke-width="2" fill="none"/></svg></button>
      <button class="open active" title="Fusion"><span class="fus"><b>F</b><small>FUS</small></span></button>
      <button class="open" title="Chrome"><svg class="app"><use href="#chrome"/></svg><span class="badge pink">P</span></button>
    </div>
    <div class="tray">
      <button class="more" title="Ícones ocultos"><svg class="ico" viewBox="0 0 16 16"><path d="M3 11l5-5 5 5" fill="none" stroke="#fff" stroke-width="1.5"/></svg></button>
      <button title="OneDrive"><svg class="ico" viewBox="0 0 16 16"><path d="M3 12q-3-1-2-4 1-2 3-2 1-4 5-3 3 0 4 4v5z" fill="#ddd"/><circle cx="11.5" cy="11" r="4.5" fill="#1473c8"/><path d="M11.500 10v4M11.500 7.500V9" stroke="#fff" stroke-width="1.2"/></svg></button>
      <div class="lang">POR<br>PTB2</div>
      <button title="Wi-Fi"><svg class="ico" viewBox="0 0 16 16"><path d="M1 6q7-7 14 0M3 9q5-4.500 10 0M5.500 11.500q2.500-2 5 0" fill="none" stroke="#fff" stroke-width="1.3"/><circle cx="8" cy="13.5" r="1.3" fill="#fff"/></svg></button>
      <button title="Som"><svg class="ico" viewBox="0 0 16 16"><path d="M1 5.500h2.500L7.500 2v12L3.500 10.500H1z" fill="none" stroke="#fff"/><path d="M10.500 6l4 4M14.500 6l-4 4" stroke="#fff"/></svg></button>
      <button title="Bateria"><svg class="battery" viewBox="0 0 20 16"><rect x="1" y="4" width="17" height="10" rx="2.5" fill="none" stroke="#fff"/><path d="M3 6h13v6H3z" fill="#7fcf9a"/><path d="M19 7v4" stroke="#fff" stroke-width="1.5"/><path d="M10 1L7 7h4l-2 5" fill="none" stroke="#fff" stroke-width="1.4"/></svg></button>
      <div class="clock">21:27<br>07/05/2026</div>
    </div>
  </footer>

  <script>
    // isometric ground grid, centred on the origin of the sketch plane
    const cx = 951.5, cy = 530.5, stepX = 35.28, slope = 0.5775;
    let minor = '', major = '';
    for (let i = -60; i <= 60; i++) {
      const x = cx + i * stepX;
      const d = `M${x - 1000} ${cy - 1000 * slope}L${x + 1000} ${cy + 1000 * slope}M${x - 1000} ${cy + 1000 * slope}L${x + 1000} ${cy - 1000 * slope}`;
      if (i % 5 === 0) major += d; else minor += d;
    }
    document.getElementById('minor').innerHTML = `<path d="${minor}"/>`;
    document.getElementById('major').innerHTML = `<path d="${major}"/>`;
  </script>
</body>
</html>
```
FILE: styles.css
```css
* { box-sizing: border-box; }
html, body {
  height: 100%;
  margin: 0;
  font-family: Roboto, "Open Sans", sans-serif;
  font-size: 12px;
  color: #4a4a4a;
  background-color: #f4f4f4;
}
body {
  display: flex;
  flex-direction: column;
  overflow: hidden;
}
button {
  display: flex;
  align-items: center;
  justify-content: center;
  margin: 0;
  padding: 0;
  border: none;
  background: none;
  font: inherit;
  color: inherit;
  cursor: pointer;
}
svg { display: block; flex: none; }
.defs { position: absolute; width: 0; height: 0; }
.ico { width: 16px; height: 16px; }
.ico-s { width: 12px; height: 12px; }
.caret {
  flex: none;
  border: 3px solid transparent;
  border-top: 5px solid #777;
  border-bottom: none;
}

/* title bar */
.titlebar {
  display: flex;
  height: 36px;
  flex: none;
  border-top: 4px solid #f9f4f2;
  background-color: #d8d9d8;
}
.quick {
  display: flex;
  align-items: center;
  gap: 12px;
  width: 217px;
  padding: 0 0 0 13px;
}
.with-caret { gap: 6px; }
.faded { opacity: .5; }
.doc-tab {
  flex: 1;
  display: flex;
  align-items: center;
  margin-top: 4px;
  padding-right: 5px;
  font-family: "Liberation Sans", sans-serif;
  color: #3c3c3c;
}
.doc-tab.active { background-color: #f4f5f5; border-radius: 3px 0 0; }
.doc-name {
  flex: 1;
  display: flex;
  align-items: center;
  justify-content: center;
  gap: 4px;
}
.doc-ico { width: 14px; height: 16px; }
.close { width: 13px; height: 13px; }
.account {
  display: flex;
  align-items: center;
  gap: 12px;
  width: 222px;
  padding: 0 8px 0 10px;
  color: #666;
}
.account .jobs { gap: 8px; }
.avatar {
  width: 24px;
  height: 24px;
  border-radius: 50%;
  background-color: #8c1462;
  color: #fff;
}

/* ribbon */
.ribbon {
  display: flex;
  flex: none;
  height: 85px;
  background-color: #f4f4f4;
}
.workspace-btn {
  gap: 7px;
  width: 111px;
  height: 62px;
  margin: 10px 3px 0 8px;
  border: 2px solid #d9d9d9;
  border-radius: 4px;
  color: #333;
}
.ribbon-tabs {
  display: flex;
  gap: 21px;
  padding: 0 0 0 13px;
}
.ribbon-tabs button {
  height: 23px;
  padding: 3px 13px 0;
  border-bottom: 3px solid transparent;
}
.ribbon-tabs .current { border-color: #444; }
.groups { display: flex; }
.group {
  display: flex;
  flex-direction: column;
  justify-content: space-between;
  height: 54px;
  margin-top: 4px;
  padding: 0 5px;
  border-right: 1px solid #dcdcdc;
}
.group:last-child { border: none; }
.tools { display: flex; justify-content: center; }
.tools button { width: 43px; height: 32px; }
.tool { width: 32px; height: 32px; overflow: visible; }
.tools .selected {
  width: 39px;
  height: 40px;
  margin: -4px 0;
  background-color: #dff0f7;
  border: 2px solid #b2dbe8;
}
.group-label {
  gap: 4px;
  height: 18px;
  padding: 0 9px;
}

/* 3D viewport */
.viewport {
  position: relative;
  flex: 1;
  min-height: 0;
  display: flex;
  flex-direction: column;
  justify-content: space-between;
  padding: 4px 1px;
}
.scene {
  position: absolute;
  inset: 0;
  width: 100%;
  height: 100%;
}
.minor { stroke: #f1f1f1; }
.major { stroke: #d6d6d8; }
.axis-line { opacity: .85; }
.watermark {
  fill: #f8e4e0;
  opacity: .8;
  font-family: "Noto Sans CJK SC", sans-serif;
  font-size: 64px;
  font-weight: 300;
}
.watermark .www { font-family: "Liberation Serif", serif; font-size: 52px; }
.watermark .host { font-family: "Liberation Serif", serif; font-size: 62px; }
.viewcube {
  position: absolute;
  top: 4px;
  right: 4px;
  width: 110px;
  height: 110px;
}
.viewcube text { text-anchor: middle; }
.axis { font-size: 13px; font-weight: 500; }
.axis.z { fill: #8080e8; }
.axis.x { fill: #e88080; }
.axis.y { fill: #8ee69c; }
.face { font-size: 9px; fill: #999; }

.browser, .comments { position: relative; width: 300px; }
.panel-head {
  display: flex;
  align-items: center;
  height: 25px;
  padding: 0 10px 0 5px;
  background-color: #f4f4f4;
  border: 1px solid #e2e2e2;
}
.panel-head span { flex: 1; padding-left: 10px; }
.panel-head.comments { padding-left: 17px; }
.tree {
  margin: 3px 0 0;
  padding: 0;
  list-style: none;
  font-family: "Open Sans", "Noto Sans", sans-serif;
}
.tree li {
  display: flex;
  align-items: center;
  height: 24px;
  padding-left: 13px;
}
.tree .l1 { padding-left: 31px; }
.tree .l2 { padding-left: 71px; }
.chev { width: 18px; margin-right: 4px; }
.chip {
  display: flex;
  align-items: center;
  height: 20px;
  background-color: #f4f4f4;
}
.chip .ico { margin: 0 5px 0 4px; }
.chip > span { padding: 0 11px 0 9px; white-space: nowrap; }
.chip .picked {
  display: flex;
  align-items: center;
  height: 20px;
  padding: 0 11px 0 0;
  background-color: #d9d9d9;
}
.picked b { padding-left: 9px; font-weight: 600; }
.chip input {
  appearance: none;
  width: 13px;
  height: 13px;
  margin: 0 7px 0 5px;
  border: 1px solid #333;
  border-radius: 50%;
  background: radial-gradient(#333 2px, #fff 3px);
}

.navbar {
  position: absolute;
  left: 50%;
  bottom: 7px;
  display: flex;
  align-items: center;
  gap: 10px;
  height: 24px;
  padding: 0 4px;
  transform: translateX(-50%);
  background-color: #f6f6f6;
}
.navbar .with-caret { gap: 5px; margin-right: -4px; }

/* timeline */
.timeline {
  display: flex;
  flex: none;
  height: 50px;
  padding: 0 9px 0 5px;
  background-color: #f4f4f4;
}
.playback {
  display: flex;
  align-items: center;
  gap: 9px;
  width: 138px;
}
.steps {
  position: relative;
  display: flex;
  flex: 1;
  padding-top: 16px;
}
.step { width: 24px; }
.marker {
  position: absolute;
  left: 110px;
  top: 10px;
  width: 12px;
  height: 32px;
}
.bracket {
  position: absolute;
  left: 8px;
  top: 34px;
  width: 97px;
  height: 8px;
}

/* taskbar */
.taskbar {
  display: flex;
  flex: none;
  align-items: center;
  justify-content: flex-end;
  position: relative;
  height: 44px;
  padding-right: 15px;
  background: linear-gradient(90deg, #7a4f14 0%, #7a4f14 11%, #8a520e 17%, #91560a 55%, #7e4f12 80%, #794d14 100%);
  color: #fff;
  font-family: "Open Sans", sans-serif;
}
.apps {
  position: absolute;
  left: 50%;
  display: flex;
  gap: 4px;
  transform: translateX(-50%);
}
.apps button {
  position: relative;
  width: 40px;
  height: 40px;
  border-radius: 3px;
}
.apps .active { background-color: #9c6220; }
.apps .open::after {
  content: "";
  position: absolute;
  bottom: 0;
  width: 6px;
  height: 3px;
  border-radius: 2px;
  background-color: #bba183;
}
.apps .active::after { width: 16px; background-color: #fbc02d; }
.app { width: 26px; height: 26px; }
.badge {
  position: absolute;
  right: 2px;
  top: 1px;
  width: 15px;
  height: 15px;
  border-radius: 50%;
}
.pink {
  background-color: #d6307c;
  font-size: 10px;
  line-height: 15px;
}
.fus {
  width: 22px;
  height: 26px;
  border-radius: 2px;
  overflow: hidden;
  background-color: #f36a12;
  text-align: center;
}
.fus b, .fus small { display: block; }
.fus b { font-size: 14px; line-height: 17px; }
.fus small {
  height: 9px;
  background-color: #6b2503;
  font-size: 7px;
  font-weight: 700;
  line-height: 9px;
}
.tray {
  display: flex;
  align-items: center;
  gap: 9px;
  line-height: 16px;
}
.more { margin-right: 6px; }
.lang { margin: 0 6px 0 8px; text-align: center; }
.battery { width: 20px; height: 16px; }
.clock { margin-left: 6px; text-align: right; }
```
